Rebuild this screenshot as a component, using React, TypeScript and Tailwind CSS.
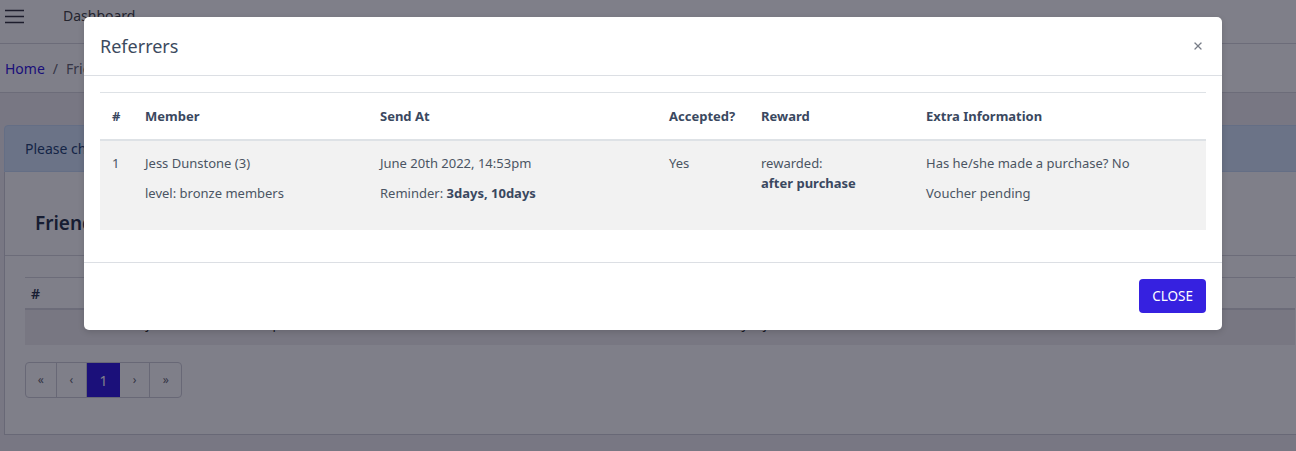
import { X } from 'lucide-react';

const font = { fontFamily: '"Noto Sans", "Open Sans", sans-serif' };

// Background page (sits behind the modal backdrop)
function PageHeader() {
  return (
    <header className="flex h-[44px] items-start border-b border-[#d8d8de] bg-white pt-[6px]">
      <svg className="ml-[5px] mt-[3px] h-[15px] w-[19px] text-[#3a3a44]" viewBox="0 0 19 15" fill="none" stroke="currentColor" strokeWidth={1.6}>
        <path d="M0 1.5h19M0 7.5h19M0 13.5h19" />
      </svg>
      <span className="ml-[39px] text-[14px] leading-[20px] text-[#4a4a4a]">Dashboard</span>
    </header>
  );
}

function Breadcrumb() {
  return (
    <div className="flex h-[49px] items-center border-b border-[#d8d8de] bg-white pl-[5px] text-[14px]">
      <a href="#" className="text-[#3621e0]">Home</a>
      <span className="mx-[8px] text-[#6b6b76]">/</span>
      <span className="text-[#6b6b76]">Friends</span>
    </div>
  );
}

function FriendsCard() {
  const pages = ['«', '‹', '1', '›', '»'];
  return (
    <div className="-mr-[20px] ml-[4px] pt-[32px]">
      <div className="flex h-[47px] items-center rounded-t-[4px] border border-[#c8dcf6] bg-[#d6e6fb] pl-[20px] text-[14px] text-[#2b4a78]">
        Please check the list of friends you have referred below.
      </div>
      <div className="h-[263px] border border-t-0 border-[#d0d0d8] bg-white">
        <div className="flex h-[84px] items-start border-b border-[#d8d8de] pl-[30px] pt-[37px] text-[19px] font-semibold leading-[28px] text-[#2e3b50]">
          Friends Referred
        </div>
        <div className="pl-[20px] pr-[20px] pt-[21px]">
          <div className="flex h-[33px] items-center border-t border-b-2 border-[#d8d8de] pl-[6px] text-[14px] font-semibold text-[#2e3b50]">
            #
          </div>
          <div className="flex h-[35px] items-center bg-[#f0eef1] text-[13px] text-[#333]">
            <span className="-mt-[6px] ml-[121px]">jessdunstone@example.com.au</span>
            <span className="-mt-[6px] ml-[376px]">Not yet joined</span>
          </div>
          <div className="mt-[17px] flex h-[36px] w-[157px] overflow-hidden rounded-[4px] border border-[#d0d0d8] text-[12px] text-[#6b6b76]">
            {pages.map((p, i) => (
              <div
                key={i}
                className={
                  p === '1'
                    ? 'flex w-[33px] items-center justify-center bg-[#3621e0] text-[14px] text-white'
                    : 'flex w-[31px] items-center justify-center border-r border-[#d0d0d8] last:border-r-0'
                }
              >
                {p}
              </div>
            ))}
          </div>
        </div>
      </div>
    </div>
  );
}

// Modal
const cols = [
  { label: '#', w: 'w-[33px]' },
  { label: 'Member', w: 'w-[235px]' },
  { label: 'Send At', w: 'w-[289px]' },
  { label: 'Accepted?', w: 'w-[92px]' },
  { label: 'Reward', w: 'w-[165px]' },
  { label: 'Extra Information', w: '' },
];

const td = 'px-[12px] pb-[27px] pt-[12px] leading-[20px]';

function ReferrersModal() {
  return (
    <div className="absolute left-[84px] top-[17px] w-[1138px] rounded-[5px] bg-white shadow-[0_2px_6px_rgba(0,0,0,0.15)]">
      <div className="flex h-[59px] items-center justify-between border-b border-[#dcdfe4] pl-[16px] pr-[18px]">
        <h5 className="mt-[1px] text-[18px] text-[#3c4a5e]">Referrers</h5>
        <button type="button" className="text-[#787d88]" aria-label="Close">
          <X size={12} strokeWidth={2.6} />
        </button>
      </div>
      <div className="px-[16px] pb-[32px] pt-[16px]">
        <table className="w-full border-collapse text-left text-[13px]">
          <thead>
            <tr className="h-[47px] border-t border-b-2 border-[#dee2e6]">
              {cols.map((c) => (
                <th key={c.label} className={`${c.w} px-[12px] pt-[1px] font-bold text-[#3a4860]`}>
                  {c.label}
                </th>
              ))}
            </tr>
          </thead>
          <tbody>
            <tr className="bg-[#f2f2f2] align-top text-[#4b5563]">
              <td className={td}>1</td>
              <td className={td}>
                <p className="mb-[10px]">Jess Dunstone (3)</p>
                <p>level: bronze members</p>
              </td>
              <td className={td}>
                <p className="mb-[10px]">June 20th 2022, 14:53pm</p>
                <p>
                  Reminder: <b className="text-[#3a4860]">3days, 10days</b>
                </p>
              </td>
              <td className={td}>Yes</td>
              <td className={td}>
                <p>rewarded:</p>
                <p>
                  <b className="text-[#3a4860]">after purchase</b>
                </p>
              </td>
              <td className={td}>
                <p className="mb-[10px]">Has he/she made a purchase? No</p>
                <p>Voucher pending</p>
              </td>
            </tr>
          </tbody>
        </table>
      </div>
      <div className="flex h-[68px] items-center justify-end border-t border-[#dcdfe4] pr-[16px]">
        <button type="button" className="h-[34px] rounded-[4px] bg-[#3621e0] px-[13px] text-[13.5px] text-white">
          CLOSE
        </button>
      </div>
    </div>
  );
}

export default function App() {
  return (
    <div className="relative h-[451px] w-[1296px] overflow-hidden bg-[#f0eef3]" style={font}>
      <PageHeader />
      <Breadcrumb />
      <FriendsCard />
      <div className="absolute inset-0 bg-[#000013]/50" />
      <ReferrersModal />
    </div>
  );
}
